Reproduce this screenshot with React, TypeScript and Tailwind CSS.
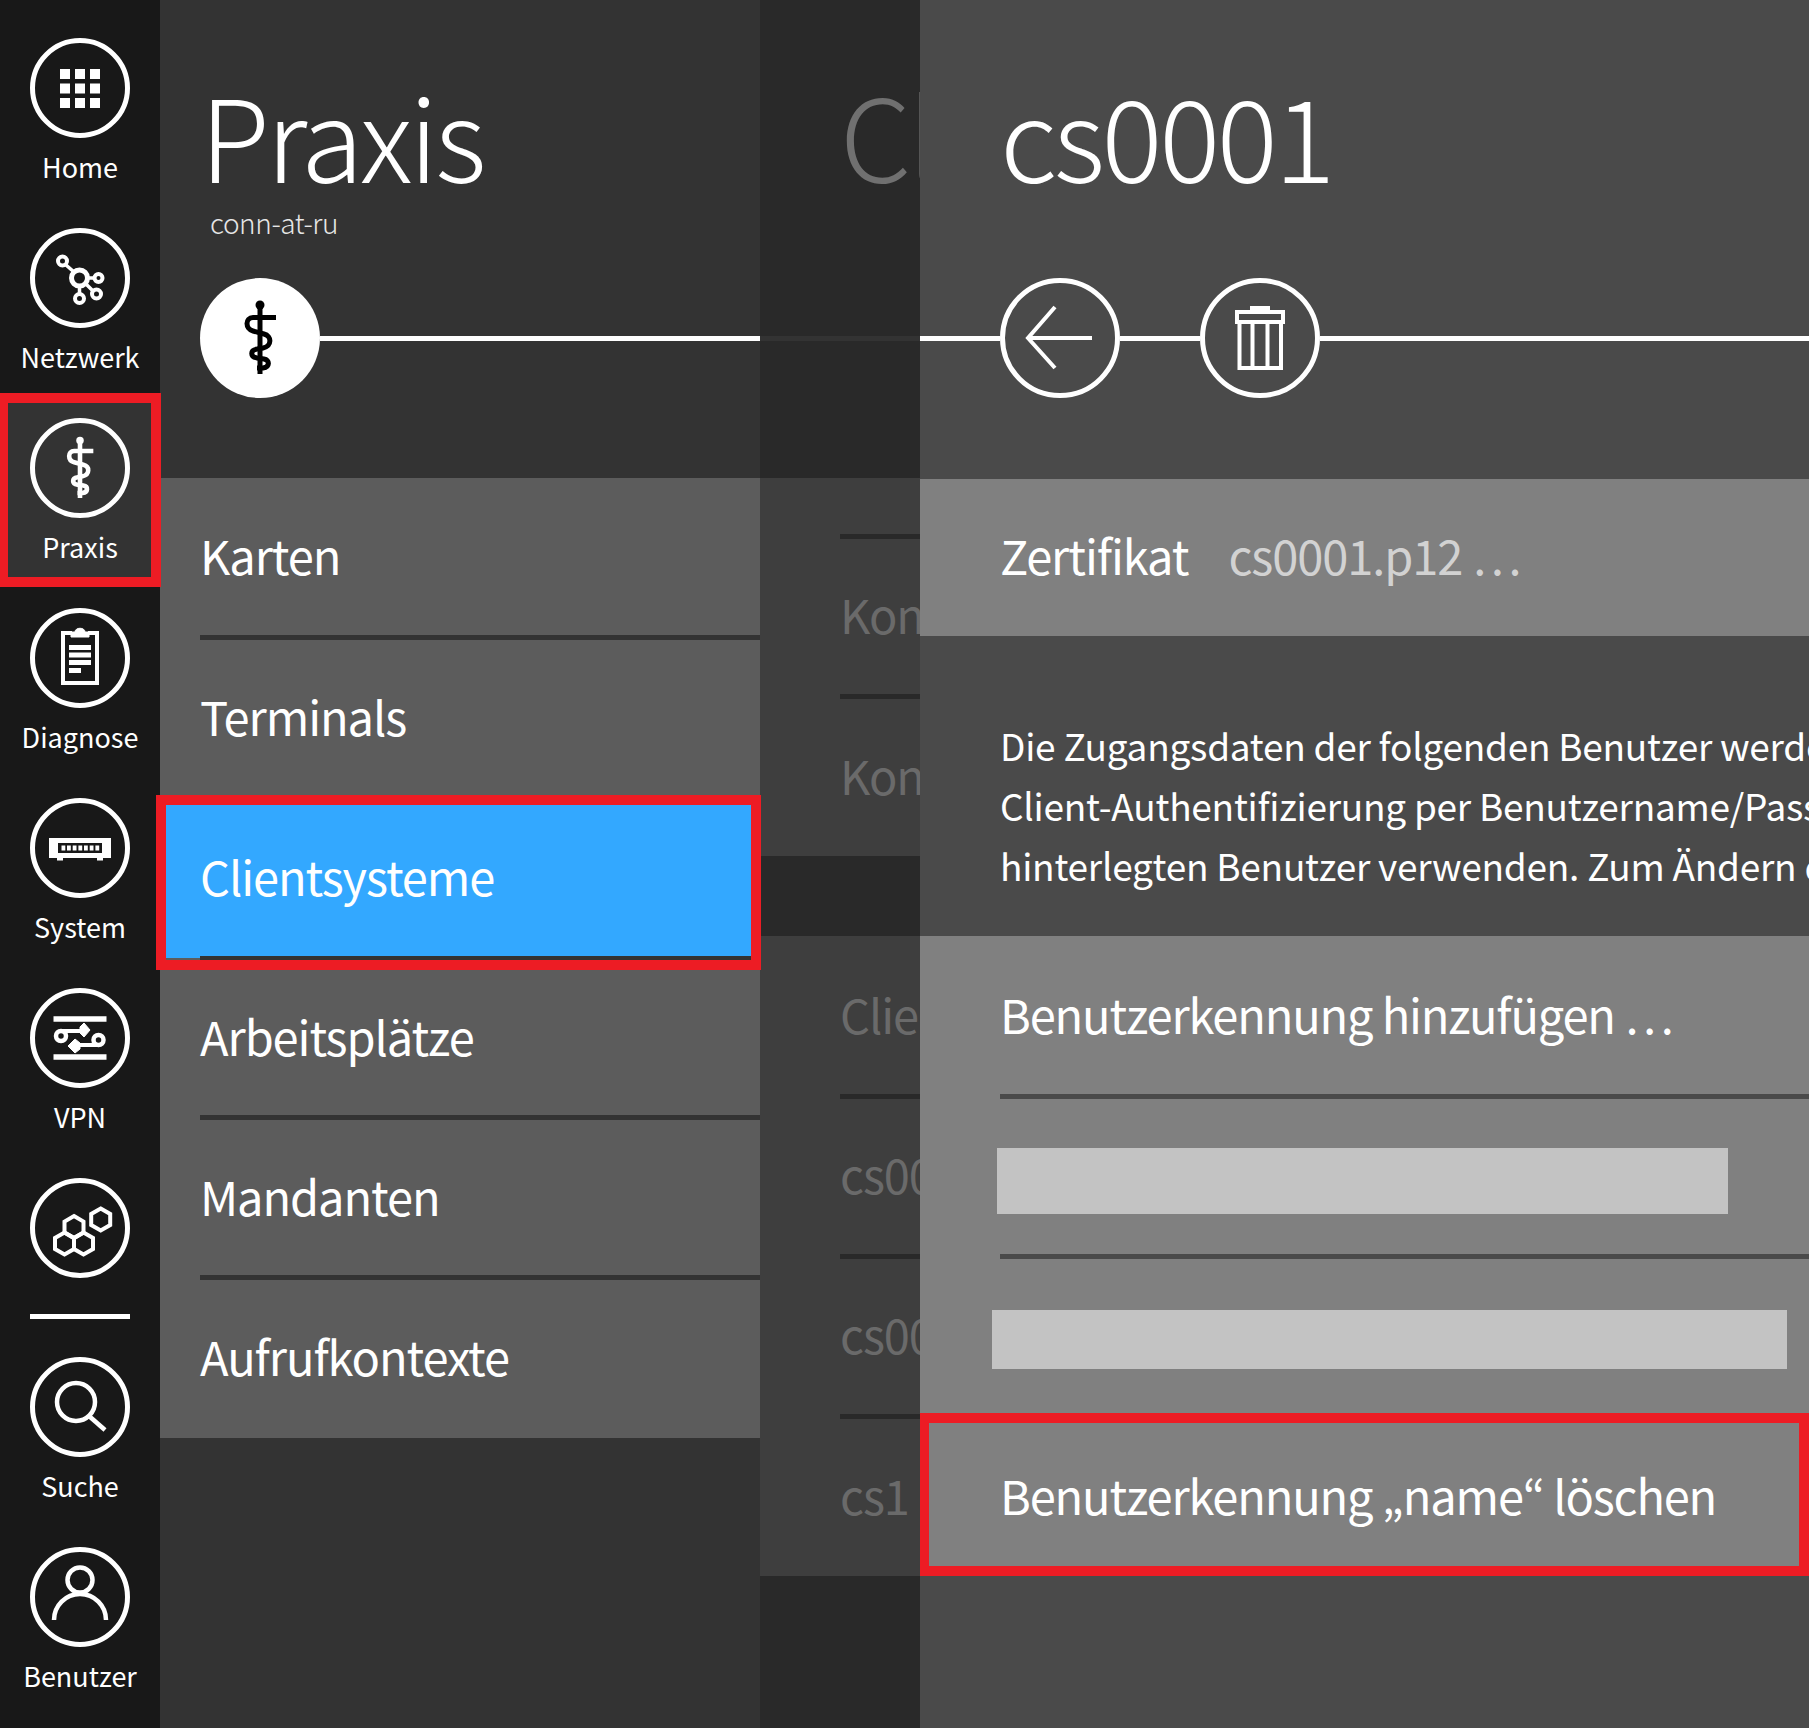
import { ReactNode } from "react";

const Caduceus = (props: { stroke: string }) => (
    <svg viewBox="-60 -60 120 120" className="w-full h-full" fill="none" stroke="currentColor" strokeWidth={props.stroke}>
        <circle cx="0" cy="-33" r="4.5" fill="currentColor" stroke="none" />
        <path d="M0 -33V36" />
        <path d="M16 -20.5H-7C-15 -20.5 -15 -9 -7 -7L4 -4C12 -2 12 8 3 10L-3 11C-10 12 -10 19 -3 20L4 21C10 22 10 29 3 30L-3 30" />
    </svg>
);

const icons: Record<string, ReactNode> = {
    home: (
        <g fill="currentColor">
            {[30, 45, 60].map((x) =>
                [31, 45.5, 60].map((y) => <rect key={`${x}-${y}`} x={x} y={y} width="10" height="10" />)
            )}
        </g>
    ),
    network: (
        <g fill="none" stroke="currentColor">
            <circle cx="49.5" cy="50" r="8" strokeWidth="5" />
            <circle cx="32.5" cy="33" r="4.5" strokeWidth="4" />
            <circle cx="68.5" cy="50" r="4" strokeWidth="4" />
            <circle cx="49.5" cy="70.5" r="4.5" strokeWidth="4" />
            <circle cx="66.5" cy="66" r="4.5" strokeWidth="4" />
            <path d="M36 37L44 44M58 50H64M49.5 58V66M56 56L63 63" strokeWidth="3.5" />
        </g>
    ),
    clipboard: (
        <g fill="none" stroke="currentColor">
            <path d="M42 25H33V75H67V25H58" strokeWidth="4" />
            <path d="M41 29V24H45C45 19 55 19 55 24H59V29Z" fill="currentColor" strokeWidth="1" />
            <path d="M39 39.5H61M39 47H61M39 54.5H61M39 62.5H51" strokeWidth="5" />
        </g>
    ),
    system: (
        <g fill="currentColor">
            <path fillRule="evenodd" d="M19 40H81V60H19ZM28 45V55H72V45Z" />
            <rect x="27" y="60" width="6" height="2.5" />
            <rect x="67" y="60" width="6" height="2.5" />
            {[31.5, 37, 42.7, 48.4, 54, 59.7, 65.4].map((x) => (
                <rect key={x} x={x} y="47.5" width="3.8" height="5" />
            ))}
        </g>
    ),
    vpn: (
        <g fill="none" stroke="currentColor">
            <path d="M23.5 31H76.5M23.5 69H76.5" strokeWidth="5.5" />
            <circle cx="31" cy="48" r="5" strokeWidth="4.5" />
            <circle cx="68.5" cy="52" r="5" strokeWidth="4.5" />
            <path d="M31 43H52M68.5 57H47" strokeWidth="4" />
            <path d="M54 35L60 42L54 49L50 45L50 39Z" fill="currentColor" strokeWidth="1" />
            <path d="M45 51L38 58L45 65L50 61L50 55Z" fill="currentColor" strokeWidth="1" />
        </g>
    ),
    hex: (
        <g fill="none" stroke="currentColor" strokeWidth="4" transform="translate(0 1.5)">
            <path d="M44 36.6L53.5 42.1V53.1L44 58.6L34.5 53.1V42.1Z" />
            <path d="M34.5 53L44 58.5V69.5L34.5 75L25 69.5V58.5Z" />
            <path d="M53.5 53L63 58.5V69.5L53.5 75L44 69.5V58.5Z" />
            <path d="M70.7 29L80.2 34.5V45.5L70.7 51L61.2 45.5V34.5Z" />
        </g>
    ),
    search: (
        <g fill="none" stroke="currentColor" strokeWidth="4.5">
            <circle cx="46" cy="45" r="19" />
            <path d="M59 59L75 73" />
        </g>
    ),
    user: (
        <g fill="none" stroke="currentColor" strokeWidth="4.5">
            <circle cx="50" cy="33" r="12.5" />
            <path d="M24 73A26 26 0 0 1 76 73" />
        </g>
    ),
};

const SideCircle = ({ children }: { children: ReactNode }) => (
    <div className="w-[100px] h-[100px] shrink-0 rounded-full border-[5px] border-white text-white relative flex items-center justify-center">
        <div className="w-[100px] h-[100px] shrink-0">{children}</div>
    </div>
);

const SideItem = (props: { icon: ReactNode; label?: string; active?: boolean }) => (
    <div className="h-[190px] flex flex-col items-center relative">
        {props.active && (
            <div className="absolute -top-[25px] left-0 w-[161px] h-[194px] bg-[#333333] border-solid border-[#ed1c24] border-t-[10px] border-b-[10px] border-l-[8px] border-r-[10px]"></div>
        )}
        <div className="relative">
            <SideCircle>{props.icon}</SideCircle>
        </div>
        {props.label && (
            <div className="relative text-white text-[27px] leading-[36px] mt-[11px]">{props.label}</div>
        )}
    </div>
);

const Svg = ({ children }: { children: ReactNode }) => (
    <svg viewBox="0 0 100 100" className="w-full h-full">{children}</svg>
);

const Sidebar = () => (
    <div className="w-[160px] shrink-0 bg-[#181818] pt-[38px] relative z-10">
        <SideItem icon={<Svg>{icons.home}</Svg>} label="Home" />
        <SideItem icon={<Svg>{icons.network}</Svg>} label="Netzwerk" />
        <SideItem icon={<Caduceus stroke="5.5" />} label="Praxis" active />
        <SideItem icon={<Svg>{icons.clipboard}</Svg>} label="Diagnose" />
        <SideItem icon={<Svg>{icons.system}</Svg>} label="System" />
        <SideItem icon={<Svg>{icons.vpn}</Svg>} label="VPN" />
        <div className="flex flex-col items-center">
            <SideCircle><Svg>{icons.hex}</Svg></SideCircle>
            <div className="w-[100px] h-[5px] bg-white mt-[36px] mb-[38px]"></div>
        </div>
        <SideItem icon={<Svg>{icons.search}</Svg>} label="Suche" />
        <SideItem icon={<Svg>{icons.user}</Svg>} label="Benutzer" />
    </div>
);

const Title = ({ children }: { children: ReactNode }) => (
    <h1 className="text-[114px] leading-[120px] tracking-[-0.03em] font-extralight whitespace-nowrap pt-[74px] h-[200px]">{children}</h1>
);

const Row = (props: { label: string; last?: boolean; top?: boolean }) => (
    <div className={props.top ? "h-[162px] pt-[2px]" : props.last ? "h-[158px]" : "h-[160px]"}>
        <div className={`ml-[40px] h-full flex items-center text-white text-[47px] tracking-[-0.023em] ${props.last ? "pb-[5px]" : `${props.top ? "pb-[4px]" : "pb-[2px]"} border-b-[5px] border-[#333333]`}`}>
            {props.label}
        </div>
    </div>
);

const PraxisPanel = () => (
    <div className="w-[600px] shrink-0 bg-[#333333] flex flex-col">
        <div className="h-[478px] text-white">
            <div className="pl-[40px]"><Title>Praxis</Title></div>
            <div className="pl-[50px] text-[28px] leading-[40px] tracking-[-0.016em] font-light text-[#e6e6e6] h-[78px] pt-[2px]">conn-at-ru</div>
            <div className="flex items-center pl-[40px]">
                <div className="w-[120px] h-[120px] rounded-full bg-white text-black"><Caduceus stroke="5" /></div>
                <div className="flex-1 h-[5px] bg-white"></div>
            </div>
        </div>
        <div className="bg-[#5c5c5c]">
            <Row label="Karten" top />
            <Row label="Terminals" />
            <div className="h-[160px] bg-[#33a8ff] relative">
                <div className="absolute left-0 bottom-0 w-[40px] h-[2px] bg-[#5c5c5c]"></div>
                <div className="ml-[40px] h-full pb-[3px] flex items-center text-white text-[47px] tracking-[-0.023em] border-b-4 border-[#333333]">Clientsysteme</div>
                <div className="absolute -left-[4px] -top-[5px] w-[605px] h-[175px] border-solid border-[#ed1c24] border-[10px] z-20"></div>
            </div>
            <Row label="Arbeitsplätze" />
            <Row label="Mandanten" />
            <Row label="Aufrufkontexte" last />
        </div>
    </div>
);

const DimRow = (props: { label?: string; height: string; last?: boolean }) => (
    <div className={props.height}>
        <div className={`ml-[80px] h-full flex items-end whitespace-nowrap text-[#6a6a6a] text-[47px] tracking-[-0.023em] leading-[60px] ${props.last ? "pb-[51px]" : "pb-[50px] border-b-[5px] border-[#292929]"}`}>
            {props.label}
        </div>
    </div>
);

const ClientPanel = () => (
    <div className="w-[160px] shrink-0 bg-[#292929] overflow-hidden flex flex-col">
        <div className="w-[600px] h-[478px] text-[#707070]">
            <div className="pl-[80px]"><Title>Clientsysteme</Title></div>
            <div className="h-[78px]"></div>
            <div className="h-[120px] flex items-center">
                <div className="w-full h-[5px] bg-[#333333]"></div>
            </div>
        </div>
        <div className="w-[600px] h-[378px] bg-[#3e3e3e]">
            <div className="h-[61px] ml-[80px] border-b-[5px] border-[#292929]"></div>
            <DimRow label="Konnektoren" height="h-[160px]" />
            <DimRow label="Kontexte" height="h-[157px]" last />
        </div>
        <div className="h-[80px]"></div>
        <div className="w-[600px] h-[640px] bg-[#3e3e3e]">
            <DimRow label="Clientsystem hinzufügen …" height="h-[163px]" />
            <DimRow label="cs0001" height="h-[160px]" />
            <DimRow label="cs0002" height="h-[160px]" />
            <DimRow label="cs1" height="h-[157px]" last />
        </div>
    </div>
);

const DetailPanel = () => (
    <div className="flex-1 min-w-0 bg-[#4a4a4a] overflow-hidden flex flex-col">
        <div className="h-[479px] text-white">
            <div className="pl-[80px]"><Title>cs0001</Title></div>
            <div className="h-[78px]"></div>
            <div className="flex items-center">
                <div className="w-[80px] h-[5px] bg-white"></div>
                <div className="w-[120px] h-[120px] rounded-full border-[5px] border-white flex items-center justify-center">
                    <svg viewBox="0 0 120 120" className="w-[120px] h-[120px] shrink-0" fill="none" stroke="currentColor" strokeWidth="4">
                        <path d="M92 60H28M55 29L28 60L55 90" />
                    </svg>
                </div>
                <div className="w-[80px] h-[5px] bg-white"></div>
                <div className="w-[120px] h-[120px] rounded-full border-[5px] border-white flex items-center justify-center">
                    <svg viewBox="0 0 120 120" className="w-[120px] h-[120px] shrink-0" fill="none" stroke="currentColor" strokeWidth="4">
                        <path d="M37 34H83V44H37ZM52 34V30H68V34M39.5 44V90H81V44M52.5 44V90M67.5 44V90" />
                    </svg>
                </div>
                <div className="flex-1 h-[5px] bg-white"></div>
            </div>
        </div>
        <div className="h-[157px] bg-[#808080] pl-[80px] flex items-center pb-[4px] text-[47px] tracking-[-0.023em] whitespace-nowrap">
            <span className="text-white">Zertifikat</span>
            <span className="text-[#d2d2d2] ml-[40px]">cs0001.p12 …</span>
        </div>
        <div className="h-[300px] pl-[80px] pt-[79px] text-white text-[37px] tracking-[-0.007em] leading-[60px] whitespace-nowrap">
            <p>Die Zugangsdaten der folgenden Benutzer werden für die</p>
            <p>Client-Authentifizierung per Benutzername/Passwort verwendet.</p>
            <p>hinterlegten Benutzer verwenden. Zum Ändern der Zugangsdaten</p>
        </div>
        <div className="h-[640px] bg-[#808080] text-white text-[47px] tracking-[-0.025em] leading-[60px] whitespace-nowrap">
            <div className="h-[163px]">
                <div className="ml-[80px] h-full flex items-end pb-[50px] border-b-[5px] border-[#4a4a4a]">Benutzerkennung hinzufügen …</div>
            </div>
            <div className="h-[160px] relative">
                <div className="absolute left-[77px] top-[49px] w-[731px] h-[66px] bg-[#c3c3c3]"></div>
                <div className="ml-[80px] h-full border-b-[5px] border-[#4a4a4a]"></div>
            </div>
            <div className="h-[160px] relative">
                <div className="absolute left-[72px] top-[51px] w-[795px] h-[59px] bg-[#c3c3c3]"></div>
            </div>
            <div className="h-[157px] relative">
                <div className="absolute -left-[1px] right-0 -top-[6px] bottom-0 border-solid border-[#ed1c24] border-[10px]"></div>
                <div className="pl-[80px] h-full flex items-end pb-[51px]">Benutzerkennung „name“ löschen</div>
            </div>
        </div>
    </div>
);

const App = () => {
    return (
        <div className="w-[1809px] h-[1728px] flex overflow-hidden font-['Noto_Sans_CJK_JP','Noto_Sans',sans-serif]">
            <Sidebar />
            <PraxisPanel />
            <ClientPanel />
            <DetailPanel />
        </div>
    );
};

export default App;
